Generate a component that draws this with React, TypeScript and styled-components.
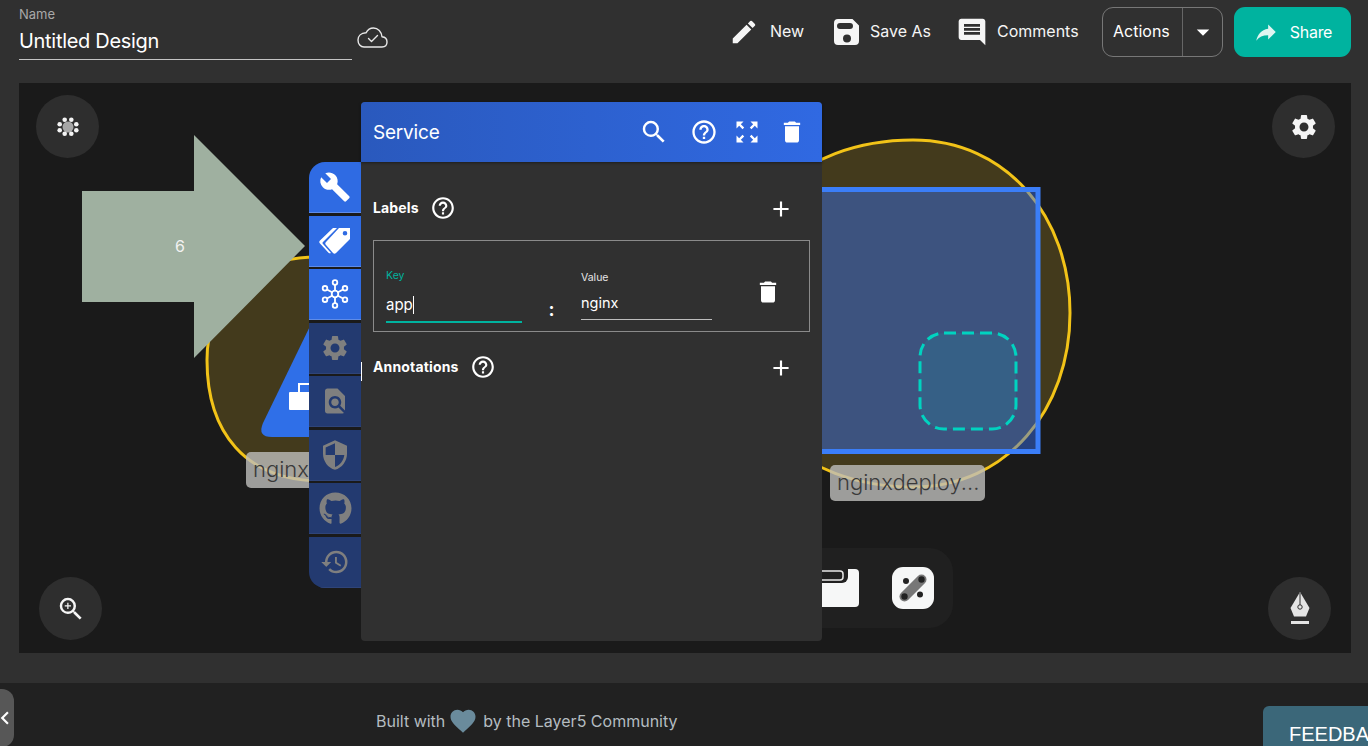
import React from "react";
import styled, { createGlobalStyle } from "styled-components";
import {
  MdAdd, MdArrowDropDown, MdBuild, MdChevronLeft, MdComment, MdDelete, MdEdit, MdFavorite,
  MdFindInPage, MdHelpOutline, MdHistory, MdSearch, MdSecurity, MdSettings, MdZoomIn, MdZoomOutMap,
} from "react-icons/md";
import { FaGithub } from "react-icons/fa";

const FONT = `Inter, "Liberation Sans", sans-serif`;

const Global = createGlobalStyle`
  html, body { margin: 0; padding: 0; height: 100%; overflow: hidden; background: #303030; }
  #root { height: 100%; }
  * { box-sizing: border-box; }
`;

const Page = styled.div`
  width: 1368px; height: 746px; display: flex; flex-direction: column; background: #303030;
  color: #fff; font-family: ${FONT}; overflow: hidden;
`;
const Header = styled.header`
  height: 83px; flex: none; display: flex; justify-content: space-between; padding: 7px 17px 0 19px;
`;
const NameGroup = styled.div`display: flex; align-items: flex-start;`;
const NameField = styled.div`
  width: 333px; height: 53px; border-bottom: 1px solid #c4c4c4; display: flex; flex-direction: column;
`;
const NameLabel = styled.span`font-size: 13px; line-height: 15px; color: #a8a8a8;`;
const NameValue = styled.span`font-size: 20px; line-height: 24px; margin-top: 7px; letter-spacing: -0.3px;`;
const CloudWrap = styled.span`margin: 20px 0 0 5px; display: flex;`;
const Actions = styled.div`display: flex; align-items: flex-start;`;
const ActionLink = styled.div<{ $gap: number; $right: number }>`
  height: 50px; display: flex; align-items: center; gap: ${p => p.$gap}px; margin-right: ${p => p.$right}px;
  font-size: 16px; color: #f5f5f5;
`;
const ActionText = styled.span<{ $w: number }>`
  margin-top: -2px; width: ${p => p.$w}px; white-space: nowrap; letter-spacing: 0;
`;
const SplitButton = styled.div`
  width: 121px; height: 50px; border: 1px solid #777; border-radius: 11px; display: flex; align-items: center;
  font-size: 16px; margin-right: 11px;
`;
const SplitText = styled.span`width: 80px; padding: 0 0 2px 10px; height: 100%; display: flex; align-items: center; border-right: 1px solid #666;`;
const SplitArrow = styled.span`flex: 1; display: flex; justify-content: center;`;
const ShareButton = styled.div`
  width: 117px; height: 50px; border-radius: 11px; background: #00b39f; display: flex; align-items: center;
  justify-content: center; gap: 11px; font-size: 16px; letter-spacing: -0.3px;
`;

const Canvas = styled.main`
  position: relative; margin: 0 17px 0 19px; height: 570px; flex: none; background: #1a1a1a;
`;
const Drawing = styled.svg`position: absolute; left: -19px; top: -83px; width: 1368px; height: 746px;`;
const ArrowText = styled.span`position: absolute; left: 156px; top: 153px; font-size: 16px; color: #f2f2f2;`;
const NodeLabel = styled.span<{ $x: number; $y: number; $w: number }>`
  position: absolute; left: ${p => p.$x}px; top: ${p => p.$y}px; width: ${p => p.$w}px; height: 36px;
  background: rgba(190, 190, 188, 0.8); border-radius: 5px; color: #3a3a3a; font-size: 22px; font-weight: 300;
  line-height: 35px; padding-left: 7px; white-space: nowrap; overflow: hidden;
`;
const RoundButton = styled.div<{ $x: number; $y: number }>`
  position: absolute; left: ${p => p.$x}px; top: ${p => p.$y}px; width: 63px; height: 63px; border-radius: 50%;
  background: #2e2e2e; display: flex; align-items: center; justify-content: center;
`;
const Dock = styled.div`
  position: absolute; left: 680px; top: 465px; width: 254px; height: 80px; border-radius: 24px; background: #202020;
  display: flex; align-items: center; justify-content: flex-end; padding-right: 19px; gap: 33px;
`;
const Tabs = styled.nav`
  position: absolute; left: 290px; top: 79px; width: 52px; display: flex; flex-direction: column; gap: 2.5px;
  border-radius: 16px 0 0 16px; overflow: hidden; background: #1a1a1a;
`;
const Tab = styled.div<{ $active?: boolean }>`
  height: 51px; display: flex; align-items: center; justify-content: center;
  background: ${p => (p.$active ? "#2f6be3" : "#233a70")};
  border-bottom: 1px solid ${p => (p.$active ? "#5f8ce8" : "#2f4478")};
  color: ${p => (p.$active ? "#fff" : "#7f7f7f")};
`;
const Panel = styled.section`
  position: absolute; left: 342px; top: 19px; width: 461px; height: 539px; background: #303030; border-radius: 4px;
  display: flex; flex-direction: column;
`;
const PanelHead = styled.div`
  height: 60px; flex: none; display: flex; align-items: center; padding: 0 16px 0 12px; border-radius: 4px 4px 0 0;
  background: linear-gradient(90deg, #2a59bd, #3069e2); box-shadow: 0 1px 3px rgba(0, 0, 0, .4);
`;
const PanelTitle = styled.span`font-size: 19px; flex: 1; letter-spacing: -0.2px;`;
const HeadIcon = styled.span<{ $right: number }>`display: flex; margin-right: ${p => p.$right}px;`;
const PanelBody = styled.div`padding: 26px 12px 0;`;
const SectionRow = styled.div<{ $top?: number }>`
  height: 40px; display: flex; align-items: center; margin-top: ${p => p.$top ?? 0}px; padding-right: 16px;
`;
const SectionTitle = styled.span`font-size: 14px; font-weight: 700; margin: -2px 11px 0 0; letter-spacing: .15px;`;
const Grow = styled.span`flex: 1;`;
const AddIcon = styled.span`display: flex; margin-top: 1px;`;
const PairCard = styled.div`
  margin-top: 12px; height: 92px; width: 437px; border: 1px solid #8a8a8a; display: flex; padding-left: 12px;
`;
const Field = styled.div<{ $w: number; $top: number; $line: string; $weight: number }>`
  flex: none; width: ${p => p.$w}px; margin-top: ${p => p.$top}px; height: fit-content;
  border-bottom: ${p => p.$weight}px solid ${p => p.$line};
`;
const FieldLabel = styled.div<{ $color: string }>`font-size: 10.5px; line-height: 13px; color: ${p => p.$color};`;
const FieldValue = styled.div<{ $gap: number; $size: number }>`
  font-size: ${p => p.$size}px; line-height: 20px; margin-top: ${p => p.$gap}px; padding-bottom: 6px; display: flex; align-items: center;
`;
const Caret = styled.i`display: inline-block; width: 1px; height: 18px; background: #fff;`;
const Colon = styled.div`flex: none; width: 59px; text-align: center; font-size: 18px; font-weight: 700; padding-top: 58px; line-height: 22px;`;
const CardDelete = styled.div`flex: 1; display: flex; justify-content: center; padding: 37px 0 0 14px;`;
const TabTick = styled.i`position: absolute; left: 342px; top: 279px; width: 1px; height: 19px; background: #fff;`;

const Footer = styled.footer`
  position: relative; margin-top: 30px; flex: 1; background: #212121; display: flex; justify-content: center;
`;
const FooterText = styled.div`
  position: absolute; left: 376px; top: 23px; display: flex; align-items: center; font-size: 16px; line-height: 28px;
  color: #b4bcc0; white-space: nowrap;
`;
const Heart = styled.span`display: flex; margin: 0 5px 0 3px; color: #6a8b9c;`;
const Collapse = styled.div`
  position: absolute; left: -14px; top: 6px; width: 28px; height: 58px; background: #575757; border-radius: 12px;
  display: flex; align-items: center; justify-content: flex-end; color: #fff;
  svg { margin-right: -4px; flex: none; }
`;
const Feedback = styled.div`
  position: absolute; left: 1263px; top: 23px; width: 120px; height: 60px; background: #3b6779; border-radius: 6px 0 0 0;
  font-family: "Liberation Sans", Arial, sans-serif; font-size: 20px; padding: 17px 0 0 26px; color: #fff; white-space: nowrap;
`;

const Cloud = () => (
  <svg width="31" height="21" viewBox="0 0 31 21" fill="none" stroke="#e8e8e8" strokeWidth="1.4" strokeLinejoin="round" strokeLinecap="round">
    <path d="M7 20h18c3 0 5-2 5-5s-2-5-5-5.2C24.500 5 21 1 16.500 1c-3.500 0-6 2-7.500 4.800C4 6 1 9 1 13c0 4 2.500 7 6 7z" />
    <path d="M11.500 11.500l3 3 6-6" />
  </svg>
);
const Save = () => (
  <svg width="26" height="26" viewBox="0 0 26 26">
    <path fillRule="evenodd" fill="#f5f5f5" d="M4 0h14.500L25 6.500V22a4 4 0 0 1-4 4H4a4 4 0 0 1-4-4V4a4 4 0 0 1 4-4zm2 4a1.500 1.500 0 0 0 0 6h10a2.500 2.500 0 0 0 0-6zm7 11.500a4 4 0 1 0 0 8 4 4 0 0 0 0-8z" />
  </svg>
);
const ShareIcon = () => (
  <svg width="26" height="26" viewBox="0 0 24 24" fill="#dff5f1"><path d="M14 5v4C7.500 10 4 15 3 20c2.500-3.500 6-5.100 11-5.100V19l7-7z" /></svg>
);
const Tags = () => (
  <svg width="32" height="28" viewBox="0 0 32 28" fill="#fff">
    <path fillRule="evenodd" d="M20 1h11v11L17 26c-1 1-2 1-3 0l-7-8c-1-1-1-2 0-3zm6 3a2.300 2.300 0 1 0 0 4.600A2.300 2.300 0 0 0 26 4z" />
    <path d="M14 1h4L4 15c-.7.7-.7 1.500 0 2l8 9c-1 .6-1.800.400-2.500-.3L1 16.500c-1-1-1-2 0-3z" />
  </svg>
);
const Hub = () => {
  const pts: [number, number][] = [[15, 3.500], [25, 9.300], [25, 20.700], [15, 26.500], [5, 20.700], [5, 9.300]];
  return (
    <svg width="30" height="30" viewBox="0 0 30 30" fill="none" stroke="#fff" strokeWidth="1.800">
      <circle cx="15" cy="15" r="3.300" />
      {pts.map(([x, y]) => <circle key={`${x}-${y}`} cx={x} cy={y} r="2.300" />)}
      {pts.map(([x, y]) => <line key={`l${x}-${y}`} x1={15 + (x - 15) * .3} y1={15 + (y - 15) * .3} x2={15 + (x - 15) * .8} y2={15 + (y - 15) * .8} />)}
    </svg>
  );
};
const Flower = () => (
  <svg width="24" height="24" viewBox="0 0 24 24">
    <circle cx="12" cy="12" r="5.500" fill="#a6a6a6" />
    {[[8.700, 4.700], [15.300, 4.700], [3.700, 9.300], [20.300, 9.300], [3.700, 15.300], [20.300, 15.300], [8.700, 18.700], [15.300, 18.700]].map(([x, y]) => (
      <circle key={`${x}-${y}`} cx={x} cy={y} r="2.300" fill="#f4f4f4" />
    ))}
  </svg>
);
const Nib = () => (
  <svg width="24" height="34" viewBox="0 0 24 34">
    <path fill="#e4e4e4" d="M12 0L21.500 16L18 24.500H6L2.500 16Z" />
    <line x1="12" y1="1" x2="12" y2="13" stroke="#2e2e2e" strokeWidth="1" />
    <circle cx="12" cy="15" r="2.200" fill="#e4e4e4" stroke="#2e2e2e" strokeWidth="1" />
    <rect x="3" y="29" width="18" height="3" fill="#e4e4e4" />
  </svg>
);
const DockBoard = () => (
  <svg width="51" height="38" viewBox="0 0 51 38">
    <path fill="#f6f7f7" d="M0 0h47a4 4 0 0 1 4 4v30a4 4 0 0 1-4 4H0z" />
    <path fill="#202020" d="M0 0h40v8a6 6 0 0 1-6 6H0z" />
    <rect x="5" y="2" width="30" height="9" rx="3" fill="#202020" stroke="#e8e8e8" strokeWidth="1.500" />
  </svg>
);
const DockLink = () => (
  <svg width="42" height="42" viewBox="0 0 42 42">
    <rect width="42" height="42" rx="11" fill="#f6f7f7" />
    <line x1="12.500" y1="29.500" x2="29.500" y2="12.500" stroke="#777" strokeWidth="10" strokeLinecap="round" />
    <circle cx="12.500" cy="29.500" r="3.200" fill="#222" />
    <circle cx="29.500" cy="12.500" r="3.200" fill="#222" />
    <circle cx="14" cy="14" r="3" fill="#222" />
    <circle cx="28" cy="27.500" r="3" fill="#222" />
  </svg>
);

export default function App() {
  return (
    <Page>
      <Global />
      <Header>
        <NameGroup>
          <NameField>
            <NameLabel>Name</NameLabel>
            <NameValue>Untitled Design</NameValue>
          </NameField>
          <CloudWrap><Cloud /></CloudWrap>
        </NameGroup>
        <Actions>
          <ActionLink $gap={11} $right={31}><MdEdit size={30} /><ActionText $w={33}>New</ActionText></ActionLink>
          <ActionLink $gap={10} $right={26}><Save /><ActionText $w={60}>Save As</ActionText></ActionLink>
          <ActionLink $gap={9} $right={22}><MdComment size={32} /><ActionText $w={83}>Comments</ActionText></ActionLink>
          <SplitButton>
            <SplitText>Actions</SplitText>
            <SplitArrow><MdArrowDropDown size={30} /></SplitArrow>
          </SplitButton>
          <ShareButton><ShareIcon />Share</ShareButton>
        </Actions>
      </Header>
      <Canvas>
        <Drawing viewBox="0 0 1368 746">
          <path d="M322 257C250 255 207 300 207 360C207 432 245 481 322 481Z" fill="#433a1c" stroke="#f2c318" strokeWidth="3" />
          <path d="M913 140C1007 140 1070 217 1070 313C1070 409 1007 487 913 487C800 487 720 409 720 313C720 217 800 140 913 140Z" fill="#433a1c" stroke="#f2c318" strokeWidth="3" />
          <path d="M330 285L263 423Q257 437 272 437H400V285Z" fill="#2f6fe8" />
          <rect x="289" y="392" width="21" height="18" rx="1" fill="#fff" />
          <path fill="none" stroke="#fff" strokeWidth="2" d="M299 392v-8h11" />
          <rect x="700" y="189.500" width="338" height="262" fill="rgba(54,113,245,.46)" stroke="#3b7ef8" strokeWidth="5" />
          <rect x="920" y="333" width="96" height="96" rx="24" fill="rgba(0,211,192,.1)" stroke="#00d3c0" strokeWidth="3" strokeDasharray="12 6" />
          <path d="M82 191H194V135L305 246L194 358V302H82Z" fill="#9fb0a0" />
        </Drawing>
        <ArrowText>6</ArrowText>
        <NodeLabel $x={227} $y={369} $w={100}>nginx</NodeLabel>
        <NodeLabel $x={811} $y={382} $w={155}>nginxdeploy...</NodeLabel>
        <RoundButton $x={17} $y={12}><Flower /></RoundButton>
        <RoundButton $x={1253} $y={12}><MdSettings size={30} color="#f5f5f5" /></RoundButton>
        <RoundButton $x={20} $y={494}><MdZoomIn size={30} color="#f5f5f5" /></RoundButton>
        <RoundButton $x={1249} $y={494}><Nib /></RoundButton>
        <Dock><DockBoard /><DockLink /></Dock>
        <Tabs>
          <Tab $active><MdBuild size={32} /></Tab>
          <Tab $active><Tags /></Tab>
          <Tab $active><Hub /></Tab>
          <Tab><MdSettings size={30} /></Tab>
          <Tab><MdFindInPage size={30} /></Tab>
          <Tab><MdSecurity size={32} /></Tab>
          <Tab><FaGithub size={33} /></Tab>
          <Tab><MdHistory size={30} /></Tab>
        </Tabs>
        <Panel>
          <PanelHead>
            <PanelTitle>Service</PanelTitle>
            <HeadIcon $right={21}><MdSearch size={30} /></HeadIcon>
            <HeadIcon $right={15}><MdHelpOutline size={28} /></HeadIcon>
            <HeadIcon $right={17}><MdZoomOutMap size={28} /></HeadIcon>
            <HeadIcon $right={0}><MdDelete size={28} /></HeadIcon>
          </PanelHead>
          <PanelBody>
            <SectionRow>
              <SectionTitle>Labels</SectionTitle>
              <MdHelpOutline size={26} />
              <Grow />
              <AddIcon><MdAdd size={26} /></AddIcon>
            </SectionRow>
            <PairCard>
              <Field $w={136} $top={28} $line="#00b39f" $weight={2}>
                <FieldLabel $color="#00b39f">Key</FieldLabel>
                <FieldValue $gap={13} $size={15}>app<Caret /></FieldValue>
              </Field>
              <Colon>:</Colon>
              <Field $w={131} $top={30} $line="#bdbdbd" $weight={1}>
                <FieldLabel $color="#e6e6e6">Value</FieldLabel>
                <FieldValue $gap={9} $size={14.5}>nginx</FieldValue>
              </Field>
              <CardDelete><MdDelete size={28} /></CardDelete>
            </PairCard>
            <SectionRow $top={15}>
              <SectionTitle>Annotations</SectionTitle>
              <MdHelpOutline size={26} />
              <Grow />
              <AddIcon><MdAdd size={26} /></AddIcon>
            </SectionRow>
          </PanelBody>
        </Panel>
        <TabTick />
      </Canvas>
      <Footer>
        <Collapse><MdChevronLeft size={26} /></Collapse>
        <FooterText>Built with<Heart><MdFavorite size={30} /></Heart>by the Layer5 Community</FooterText>
        <Feedback>FEEDBACK</Feedback>
      </Footer>
    </Page>
  );
}
